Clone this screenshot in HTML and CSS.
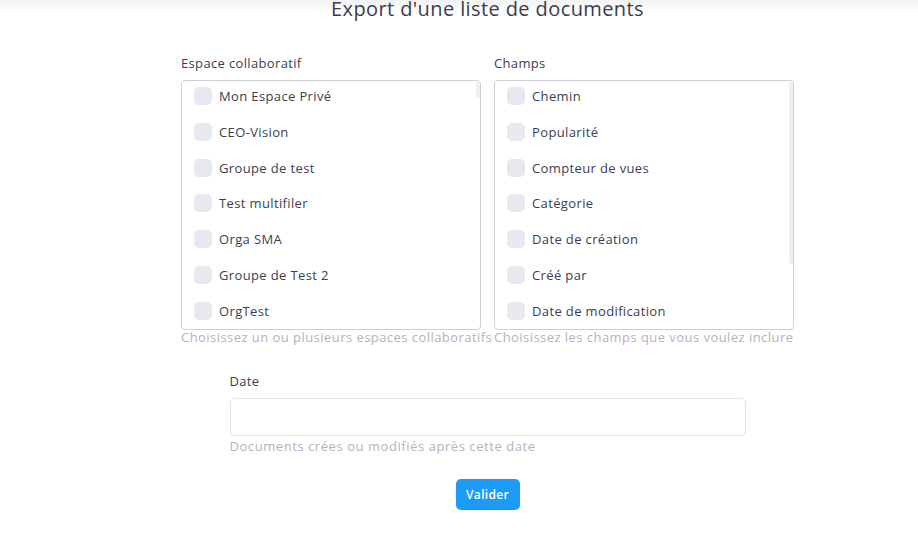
FILE: index.html
```html
<!DOCTYPE html>
<html lang="fr">
<head>
<meta charset="utf-8">
<title>Export d'une liste de documents</title>
<link rel="stylesheet" href="styles.css">
</head>
<body>
<div class="page">
  <h1 class="title">Export d'une liste de documents</h1>
  <div class="columns">
    <div class="field">
      <div class="label">Espace collaboratif</div>
      <div class="list-wrap">
        <div class="list">
          <label class="item"><span class="check"></span><span>Mon Espace Privé</span></label>
          <label class="item"><span class="check"></span><span>CEO-Vision</span></label>
          <label class="item"><span class="check"></span><span>Groupe de test</span></label>
          <label class="item"><span class="check"></span><span>Test multifiler</span></label>
          <label class="item"><span class="check"></span><span>Orga SMA</span></label>
          <label class="item"><span class="check"></span><span>Groupe de Test 2</span></label>
          <label class="item"><span class="check"></span><span>OrgTest</span></label>
        </div>
        <span class="thumb thumb-small"></span>
      </div>
      <div class="hint">Choisissez un ou plusieurs espaces collaboratifs</div>
    </div>
    <div class="field">
      <div class="label">Champs</div>
      <div class="list-wrap">
        <div class="list">
          <label class="item"><span class="check"></span><span>Chemin</span></label>
          <label class="item"><span class="check"></span><span>Popularité</span></label>
          <label class="item"><span class="check"></span><span>Compteur de vues</span></label>
          <label class="item"><span class="check"></span><span>Catégorie</span></label>
          <label class="item"><span class="check"></span><span>Date de création</span></label>
          <label class="item"><span class="check"></span><span>Créé par</span></label>
          <label class="item"><span class="check"></span><span>Date de modification</span></label>
          <label class="item"><span class="check"></span><span>Modifié par</span></label>
          <label class="item"><span class="check"></span><span>Taille</span></label>
        </div>
        <span class="thumb thumb-large"></span>
      </div>
      <div class="hint">Choisissez les champs que vous voulez inclure</div>
    </div>
  </div>
  <div class="date-field">
    <div class="label">Date</div>
    <input class="date-input" type="text">
    <div class="hint hint-date">Documents crées ou modifiés après cette date</div>
  </div>
  <div class="actions">
    <button class="btn" type="button">Valider</button>
  </div>
</div>
</body>
</html>
```
FILE: styles.css
```css
html, body {
  margin: 0;
  padding: 0;
}
body {
  background: #fff linear-gradient(#f3f3f3, #ffffff 14px) no-repeat;
  font-family: "Open Sans", "Noto Sans", sans-serif;
  color: #3b3e50;
  height: 545px;
  overflow: hidden;
}
.page {
  padding-left: 57px;
}
.title {
  margin: -4px 0 0;
  font-size: 20px;
  line-height: 25px;
  font-weight: 400;
  letter-spacing: 0.4px;
  text-align: center;
  color: #3a3d4f;
}
.columns {
  display: flex;
  justify-content: center;
  gap: 13px;
  margin-top: 32px;
}
.field {
  width: 300px;
}
.label {
  font-size: 13px;
  line-height: 20px;
  letter-spacing: 0.35px;
  margin-bottom: 7px;
  color: #3b3e50;
}
.list-wrap {
  position: relative;
}
.list {
  box-sizing: border-box;
  height: 250px;
  border: 1px solid #cfcfd5;
  border-radius: 4px;
  overflow: hidden;
  padding: 6px 0 0 12px;
}
.thumb {
  position: absolute;
  right: 1px;
  top: 2px;
  width: 4px;
  border-radius: 2px;
  background: #efeff1;
}
.thumb-small {
  height: 16px;
}
.thumb-large {
  height: 182px;
}
.item {
  display: flex;
  align-items: center;
  gap: 7px;
  height: 18px;
  margin-bottom: 17.8px;
  font-size: 13px;
  letter-spacing: 0.37px;
  color: #3b3e50;
  white-space: nowrap;
}
.check {
  flex: none;
  width: 18px;
  height: 18px;
  border-radius: 5px;
  background: #e8e9f0;
}
.hint {
  font-size: 13px;
  line-height: 14px;
  letter-spacing: 0.45px;
  color: #b3b3bd;
  white-space: nowrap;
}
.hint-date {
  letter-spacing: 0.56px;
}
.date-field {
  width: 516px;
  margin: 27px auto 0;
}
.date-field .label {
  margin-bottom: 7px;
}
.date-input {
  display: block;
  box-sizing: border-box;
  width: 516px;
  height: 38px;
  margin: 0 0 3px;
  border: 1px solid #e3e3ea;
  border-radius: 5px;
  background: #fff;
  outline: none;
}
.actions {
  display: flex;
  justify-content: center;
  margin-top: 26px;
}
.btn {
  width: 64px;
  height: 31px;
  border: 0;
  border-radius: 5px;
  background: #1c9cf6;
  color: #fff;
  font-family: "Open Sans", "Noto Sans", sans-serif;
  font-size: 12px;
  font-weight: 600;
  letter-spacing: 0.3px;
  padding: 0;
}
```
